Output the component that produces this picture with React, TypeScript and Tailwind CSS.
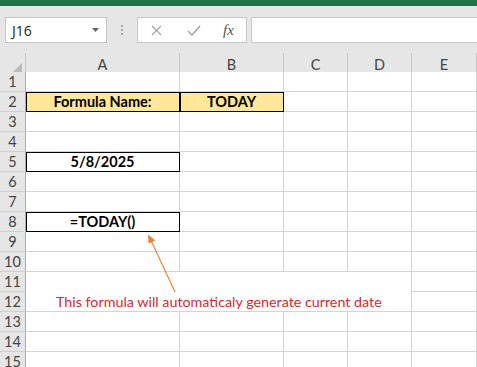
import React from "react";

const font = { fontFamily: "Lato, 'Liberation Sans', sans-serif" };

const cols = ["A", "B", "C", "D", "E"];

function RowHeader({ n }: { n: number }) {
  return (
    <div className="flex items-center justify-center border-r border-b border-r-[#ababab] border-b-[#d0d0d0] bg-[#e6e6e6] pt-[1px] text-[14.5px] text-[#444]">
      {n}
    </div>
  );
}

function Cell({
  children,
  bordered,
  yellow,
}: {
  children?: React.ReactNode;
  bordered?: boolean;
  yellow?: boolean;
}) {
  return (
    <div
      className={
        "flex items-center justify-center border-r border-b pt-[1px] text-[14.5px] font-bold text-black " +
        (bordered
          ? "border-black shadow-[inset_1px_1px_0_#000] "
          : "border-[#d4d4d4] ") +
        (yellow ? "bg-[#ffe699]" : "bg-white")
      }
    >
      {children}
    </div>
  );
}

export default function App() {
  const rows: React.ReactNode[] = [];
  for (let r = 1; r <= 15; r++) {
    rows.push(<RowHeader key={"h" + r} n={r} />);
    if (r === 2) {
      rows.push(
        <Cell key="a2" bordered yellow>
          Formula Name:
        </Cell>,
        <Cell key="b2" bordered yellow>
          TODAY
        </Cell>,
        <Cell key="c2" />,
        <Cell key="d2" />,
        <Cell key="e2" />
      );
    } else if (r === 5) {
      rows.push(
        <Cell key="a5" bordered>
          5/8/2025
        </Cell>,
        <Cell key="b5" />,
        <Cell key="c5" />,
        <Cell key="d5" />,
        <Cell key="e5" />
      );
    } else if (r === 8) {
      rows.push(
        <Cell key="a8" bordered>
          =TODAY()
        </Cell>,
        <Cell key="b8" />,
        <Cell key="c8" />,
        <Cell key="d8" />,
        <Cell key="e8" />
      );
    } else if (r === 11) {
      rows.push(
        <div
          key="tb"
          className="col-span-4 row-span-2 flex items-end border-r border-b border-[#d4d4d4] bg-white pb-[2px] pl-[30px] text-[14.3px] leading-none text-[#e3262d]"
        >
          This formula will automaticaly generate current date
        </div>,
        <Cell key="e11" />
      );
    } else if (r === 12) {
      rows.push(<Cell key="e12" />);
    } else {
      cols.forEach((c) => rows.push(<Cell key={c + r} />));
    }
  }

  return (
    <div
      className="relative h-[367px] w-[477px] overflow-hidden bg-white"
      style={font}
    >
      {/* title bar strip */}
      <div className="h-[6px] bg-[#217346]" />

      {/* formula bar */}
      <div className="flex h-[47px] items-start bg-[#e6e6e6] pt-[11px]">
        <div
          className="ml-[5px] flex h-[26px] w-[102px] items-center justify-between border border-[#c6c6c6] bg-white pl-[6px] pr-[7px] text-[#222]"
          style={{ fontFamily: "'Open Sans', 'Noto Sans', sans-serif" }}
        >
          <span className="text-[14px]">J16</span>
          <svg width="7" height="4" viewBox="0 0 7 4">
            <path d="M0 0 L7 0 L3.5 4 Z" fill="#666" />
          </svg>
        </div>
        <div className="flex h-[26px] w-[30px] flex-col items-center justify-center gap-[2px]">
          <div className="h-[2px] w-[2px] bg-[#a8a8a8]" />
          <div className="h-[2px] w-[2px] bg-[#a8a8a8]" />
          <div className="h-[2px] w-[2px] bg-[#a8a8a8]" />
        </div>
        <div className="flex h-[26px] w-[110px] items-center border border-[#c6c6c6] bg-white">
          <svg className="ml-[13px]" width="11" height="11" viewBox="0 0 11 11">
            <path d="M1 1 L10 10 M10 1 L1 10" stroke="#a6a6a6" strokeWidth="1.3" />
          </svg>
          <svg className="ml-[25px]" width="14" height="11" viewBox="0 0 14 11">
            <path d="M1 6 L5 10 L13 1" stroke="#a6a6a6" strokeWidth="1.6" fill="none" />
          </svg>
          <span
            className="ml-[22px] text-[15px] italic text-[#555]"
            style={{ fontFamily: "'Liberation Serif', serif" }}
          >
            fx
          </span>
        </div>
        <div className="ml-[4px] h-[26px] flex-1 border border-r-0 border-[#c6c6c6] bg-white" />
      </div>

      {/* column headers */}
      <div className="grid h-[19px] grid-cols-[26px_154px_104px_64px_64px_65px] bg-[#e6e6e6]">
        <div className="flex items-end justify-end border-r border-b border-r-[#c6c6c6] border-b-[#ababab] pb-[1px] pr-[3px]">
          <svg width="12" height="12" viewBox="0 0 12 12">
            <path d="M12 0 L12 12 L0 12 Z" fill="#b9b9b9" />
          </svg>
        </div>
        {cols.map((c) => (
          <div
            key={c}
            className="flex items-center justify-center border-r border-b border-r-[#c6c6c6] border-b-[#ababab] pt-[1px] text-[14.5px] text-[#444]"
          >
            {c}
          </div>
        ))}
      </div>

      {/* sheet grid */}
      <div className="grid grid-cols-[26px_154px_104px_64px_64px_65px] auto-rows-[20px]">
        {rows}
      </div>

      {/* annotation arrow */}
      <svg
        className="pointer-events-none absolute left-0 top-0"
        width="477"
        height="367"
        viewBox="0 0 477 367"
      >
        <line x1="175" y1="292" x2="151.5" y2="241.5" stroke="#ed7d31" strokeWidth="1.1" />
        <path d="M148 234.5 L155.2 240.6 L148.6 243.6 Z" fill="#ed7d31" />
      </svg>
    </div>
  );
}
